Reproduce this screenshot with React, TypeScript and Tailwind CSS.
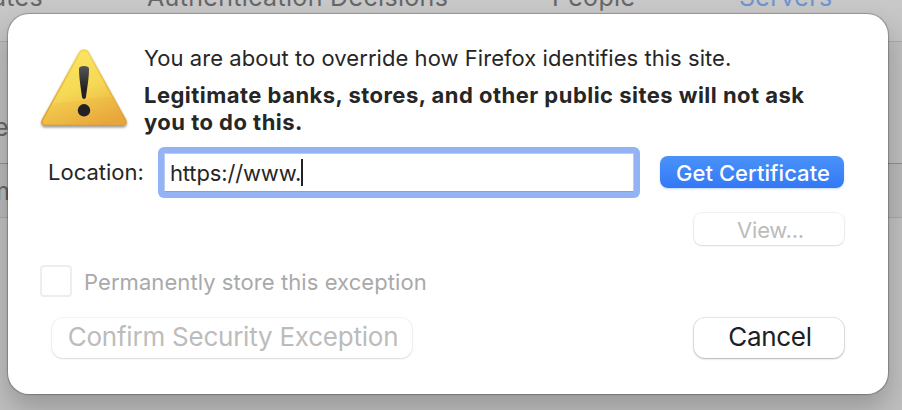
import { useState } from "react";
import clsx from "clsx";

const WarningIcon = () => (
  <svg width="96" height="90" viewBox="0 0 96 90" className="block shrink-0">
    <defs>
      <linearGradient id="body" x1="0.3" y1="0" x2="0.7" y2="1">
        <stop offset="0" stopColor="#fbe763" />
        <stop offset="0.5" stopColor="#f6d855" />
        <stop offset="1" stopColor="#e9a93c" />
      </linearGradient>
      <linearGradient id="shade" x1="0" y1="0" x2="1" y2="0.7">
        <stop offset="0" stopColor="#efc045" stopOpacity="0.8" />
        <stop offset="1" stopColor="#e39c35" stopOpacity="0.65" />
      </linearGradient>
      <linearGradient id="edge" x1="0" y1="0" x2="0" y2="1">
        <stop offset="0" stopColor="#f3d557" />
        <stop offset="1" stopColor="#dc9e32" />
      </linearGradient>
      <linearGradient id="mark" x1="0" y1="0" x2="0" y2="1">
        <stop offset="0" stopColor="#555555" />
        <stop offset="0.7" stopColor="#222222" />
      </linearGradient>
      <filter id="soft" x="-10%" y="-10%" width="120%" height="130%">
        <feDropShadow dx="0" dy="1.5" stdDeviation="1.3" floodOpacity="0.4" />
      </filter>
    </defs>
    <path
      d="M43.5 9C45.5 5.2 50.5 5.2 52.5 9L89.3 75.5C91.2 79 89.6 81.3 86 81.3H10C6.4 81.3 4.8 79 6.7 75.5Z"
      fill="url(#body)"
      stroke="url(#edge)"
      strokeWidth="1.6"
      filter="url(#soft)"
    />
    <path
      d="M15.5 59.5C38 58 60 52 76.5 53L88.7 76C89.8 79.3 89 80.5 86 80.5H10C7 80.5 6.2 79 7.5 76Z"
      fill="url(#shade)"
      opacity="0.4"
    />
    <path
      d="M43 25C43 22.8 45 22 48 22C51 22 53 22.8 53 25C53 34 51 45 50 53C49.6 55.5 46.4 55.5 46 53C45 45 43 34 43 25Z"
      fill="url(#mark)"
    />
    <circle cx="48" cy="66.3" r="6.2" fill="#222222" />
  </svg>
);

interface DialogButtonProps {
  label: string;
  className: string;
  disabled?: boolean;
}

const DialogButton = ({ label, className, disabled }: DialogButtonProps) => (
  <button
    type="button"
    disabled={disabled}
    className={clsx(
      "flex items-center justify-center whitespace-nowrap",
      className
    )}
  >
    {label}
  </button>
);

// Certificate manager window that sits dimmed behind the sheet
const CertificateManager = () => (
  <div className="flex h-full flex-col text-[25px] tracking-[0.33px] text-[#666666]">
    <div className="flex h-[41px] shrink-0 bg-linear-to-b from-[#c8c8c8] to-[#c2c2c2]">
      <div className="-mt-[19px] -ml-[78px] flex whitespace-nowrap leading-[32px]">
        <span className="w-[225px] pr-[104px] text-right">
          <span className="-ml-[60px]">Certificates</span>
        </span>
        <span className="w-[405px]">Authentication Decisions</span>
        <span className="w-[187px]">People</span>
        <span className="text-[#6f93ce]">Servers</span>
      </div>
    </div>
    <div className="h-[122px] shrink-0 overflow-hidden border-t border-[#a9a9a9] bg-[#bcbcbc] pt-[67px] leading-[36px]">
      <span className="-ml-[6px]">e</span>
    </div>
    <div className="h-[54px] shrink-0 overflow-hidden border-t border-[#8e8e8e] bg-[#b7b7b7] pt-[9px] leading-[36px]">
      <span className="-ml-[12px]">m</span>
    </div>
    <div className="grow border-t border-[#a6a6a6] bg-[#bebebe]" />
  </div>
);

export default function App() {
  const [location, setLocation] = useState("https://www.");

  return (
    <div className="relative h-[410px] w-[902px] overflow-hidden bg-[#b5b5b5] font-['Inter',sans-serif]">
      <CertificateManager />
      <div className="absolute top-[14px] left-[8px] flex h-[380px] w-[880px] flex-col rounded-[21px] bg-white text-[22px] text-[#262626] shadow-[0_0_1px_1px_rgba(0,0,0,0.25),0_14px_26px_rgba(0,0,0,0.2)]">
        <div className="flex h-[133px] pt-[30px] pl-[28px]">
          <WarningIcon />
          <div className="ml-[12px] whitespace-nowrap">
            <p className="leading-[28px] tracking-[0.05px]">
              You are about to override how Firefox identifies this site.
            </p>
            <p className="mt-[10px] leading-[27px] font-bold tracking-[0.47px]">
              Legitimate banks, stores, and other public sites will not ask
              <br />
              you to do this.
            </p>
          </div>
        </div>
        <div className="flex h-[51px] items-center pl-[40px]">
          <label htmlFor="location" className="w-[110px]">
            Location:
          </label>
          <div className="flex h-[51px] w-[482px] items-center rounded-[6px] bg-[#94b3f4] p-[6px]">
            <div className="flex h-full w-full items-center border border-[#b4ccf6] border-b-[#7fa3e0] bg-white pl-[5px]">
              <input
                id="location"
                value={location}
                onChange={(e) => setLocation(e.target.value)}
                className="w-[132px] pt-px tracking-[-0.15px] outline-none"
              />
              <span className="-ml-px h-[27px] w-[2px] bg-[#222222]" />
            </div>
          </div>
          <DialogButton
            label="Get Certificate"
            className="mb-[2px] ml-[20px] h-[32px] w-[184px] rounded-[8px] bg-linear-to-b from-[#4a92f8] to-[#3478f6] pt-[3px] pl-[2px] font-medium tracking-[0.04px] text-white shadow-[0_1px_2px_rgba(52,120,246,0.3)]"
          />
        </div>
        <div className="mt-[15px] flex h-[32px] justify-end pr-[44px]">
          <DialogButton
            label="View..."
            disabled
            className="w-[150px] rounded-[8px] pt-[3px] pl-[3px] tracking-[-0.2px] text-[#bcbcbc] shadow-[0_0_1px_1px_rgba(0,0,0,0.06),0_1px_2px_rgba(0,0,0,0.1)]"
          />
        </div>
        <div className="mt-[19px] flex h-[34px] items-center pl-[32px] text-[#a9a9a9]">
          <span className="size-[32px] rounded-[4px] border-2 border-[#eeeeee]" />
          <span className="ml-[12px] pt-[2px] tracking-[0.07px]">
            Permanently store this exception
          </span>
        </div>
        <div className="mt-[20px] flex h-[40px] justify-between pr-[44px] pl-[44px] text-[26px]">
          <DialogButton
            label="Confirm Security Exception"
            disabled
            className="w-[360px] rounded-[11px] pb-[3px] pl-[2px] tracking-[-0.23px] text-[#bcbcbc] shadow-[0_0_1px_1px_rgba(0,0,0,0.05),0_1px_2px_rgba(0,0,0,0.1)]"
          />
          <DialogButton
            label="Cancel"
            className="w-[150px] rounded-[11px] pb-[3px] pl-[2px] tracking-[-0.3px] text-[#202020] shadow-[0_0_1px_1px_rgba(0,0,0,0.1),0_1px_2px_rgba(0,0,0,0.22)]"
          />
        </div>
      </div>
    </div>
  );
}
